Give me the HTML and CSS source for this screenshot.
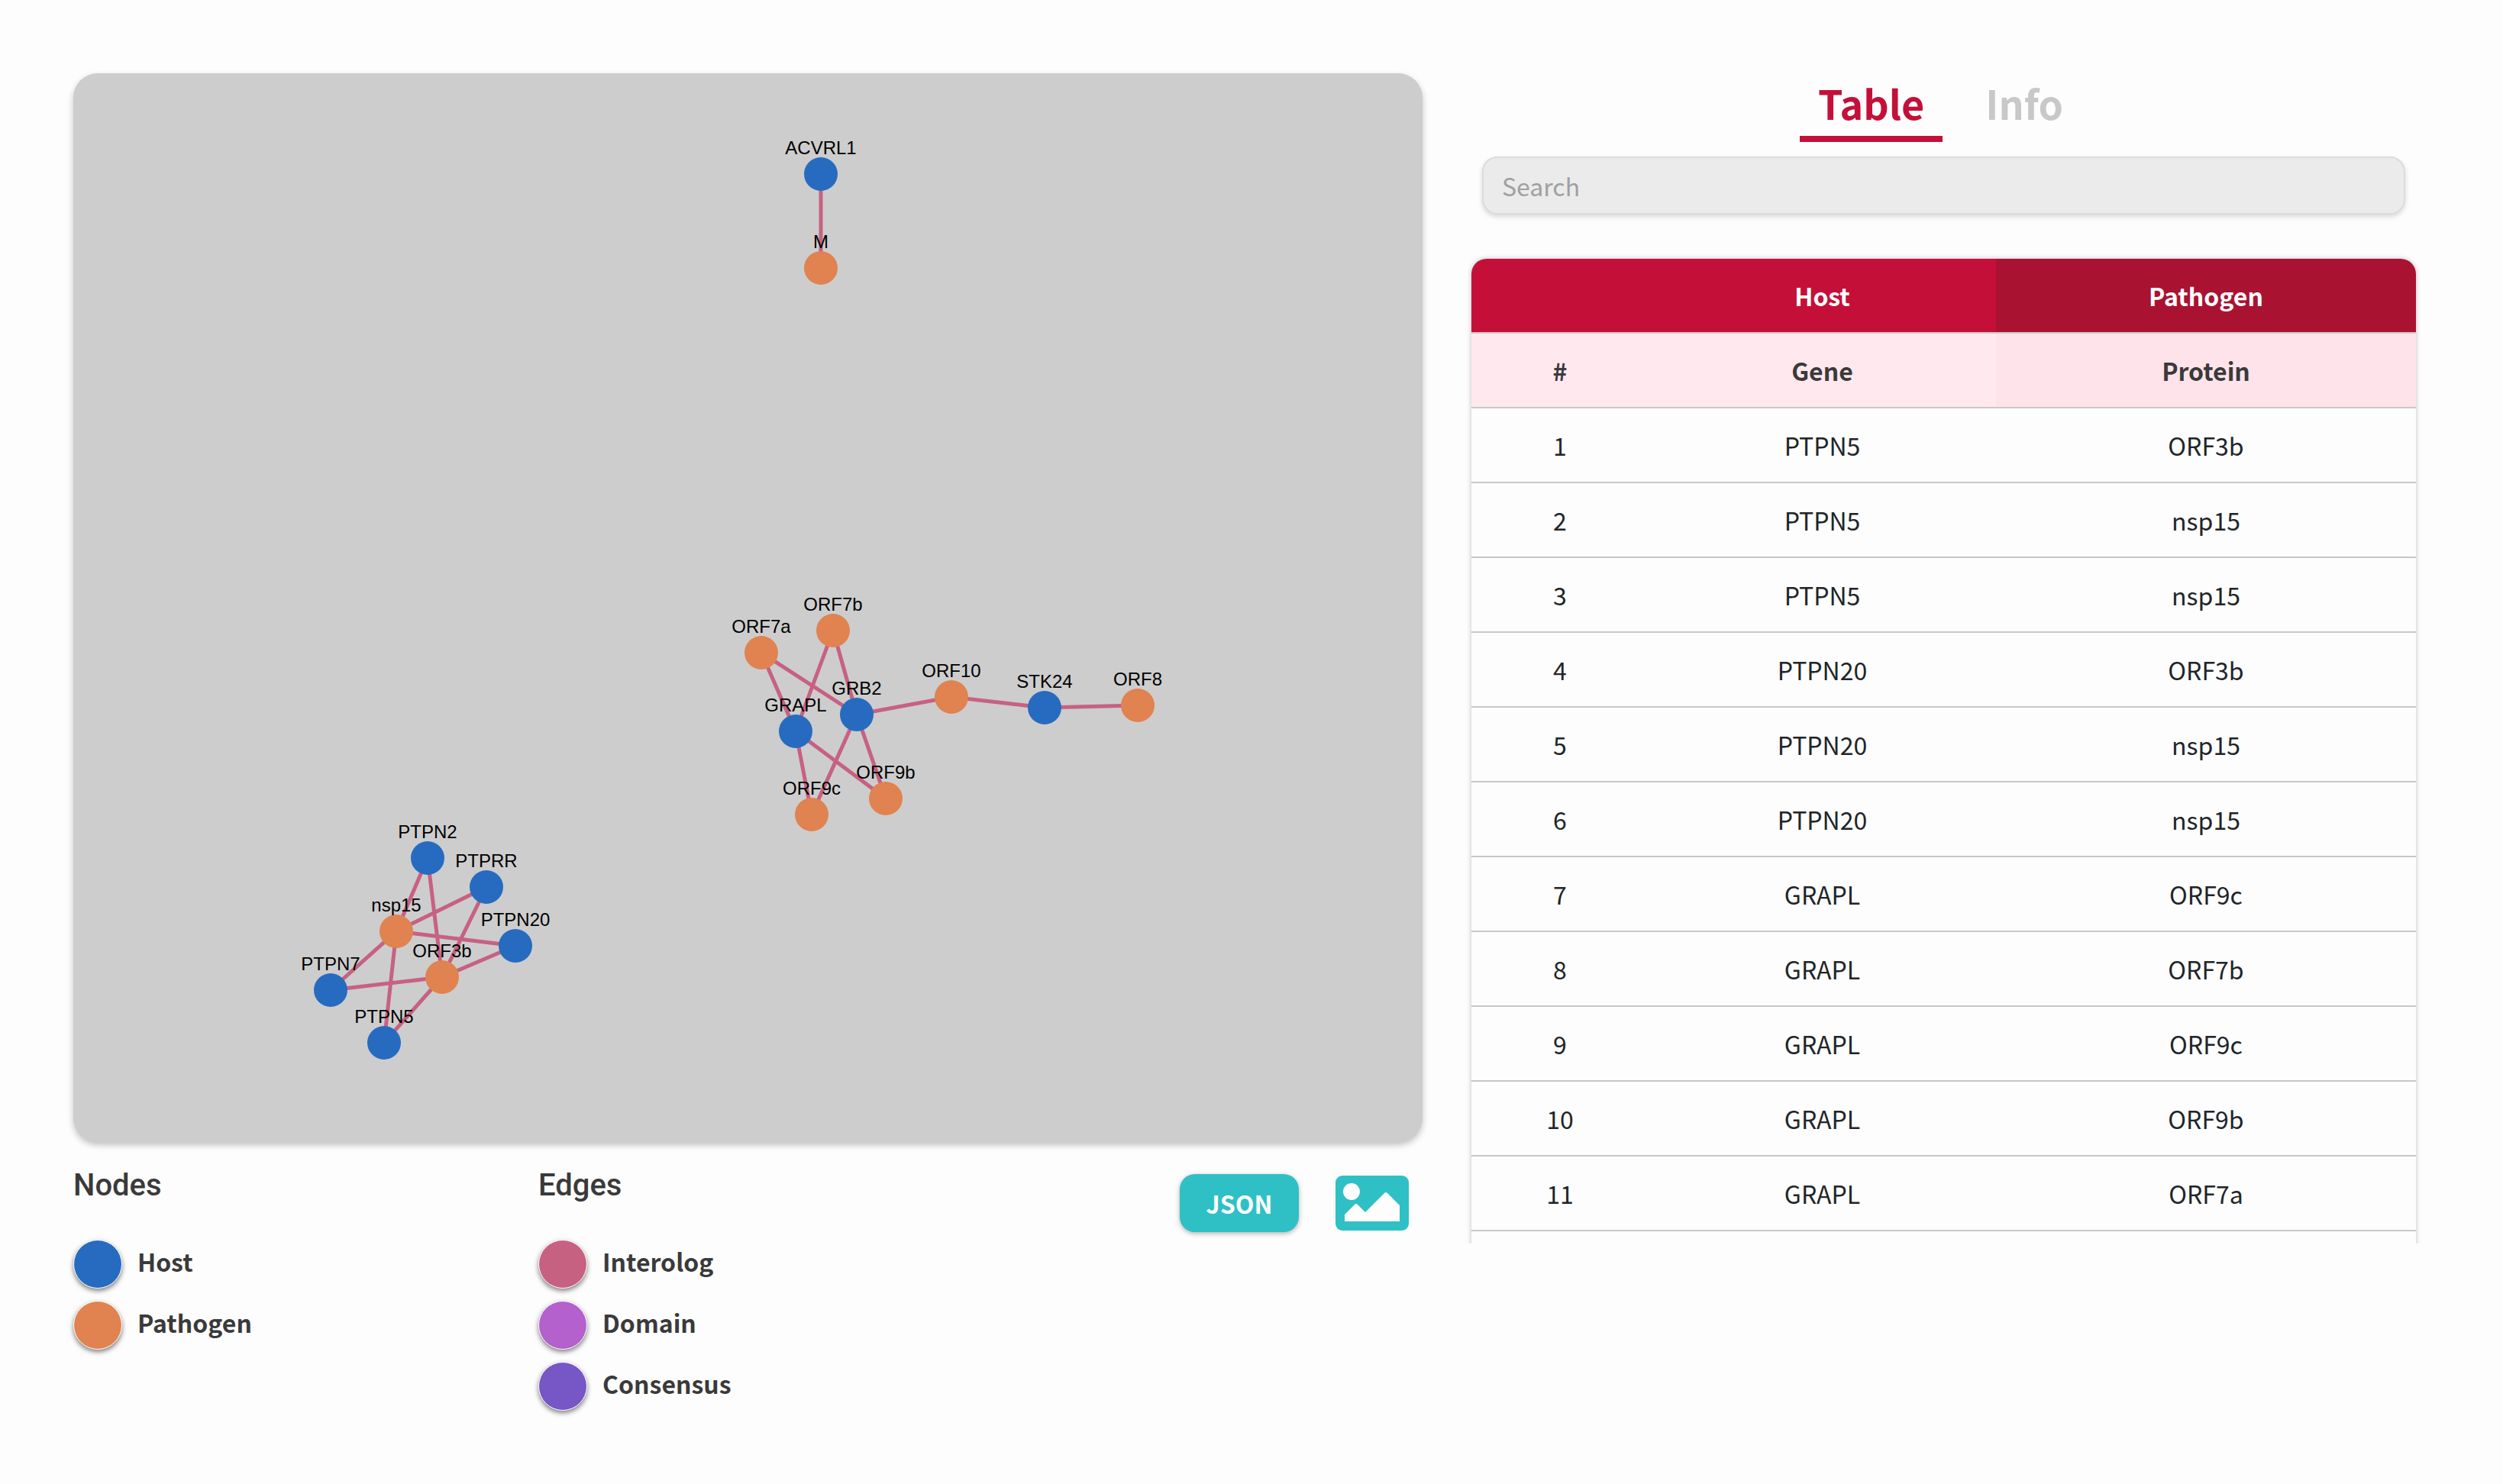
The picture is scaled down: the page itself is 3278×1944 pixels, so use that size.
FILE: index.html
```html
<!DOCTYPE html>
<html lang="en">
<head>
<meta charset="utf-8">
<meta name="viewport" content="width=device-width, initial-scale=1">
<title>Interaction network</title>
<link rel="stylesheet" href="styles.css">
</head>
<body>
<main class="page">
  <section class="network">
    <svg class="graph" viewBox="0 0 1767 1400" role="img" aria-label="Host and pathogen interaction network">
      <g transform="translate(-96 -96)">
        <g class="edges">
          <path d="M1075 228V351"/>
          <path d="M997 855L1122 936M997 855L1042 958M1091 826L1122 936M1091 826L1042 958M1063 1067L1122 936M1063 1067L1042 958M1160 1046L1122 936M1160 1046L1042 958M1122 936L1246 913L1368 927L1490 924"/>
          <path d="M560 1124L519 1220M560 1124L579 1280M637 1162L519 1220M637 1162L579 1280M675 1239L519 1220M675 1239L579 1280M433 1297L519 1220M433 1297L579 1280M503 1366L519 1220M503 1366L579 1280"/>
        </g>
        <g class="node-host">
          <circle cx="1075" cy="228" r="22"/><circle cx="1122" cy="936" r="22"/><circle cx="1042" cy="958" r="22"/><circle cx="1368" cy="927" r="22"/>
          <circle cx="560" cy="1124" r="22"/><circle cx="637" cy="1162" r="22"/><circle cx="675" cy="1239" r="22"/><circle cx="433" cy="1297" r="22"/><circle cx="503" cy="1366" r="22"/>
        </g>
        <g class="node-pathogen">
          <circle cx="1075" cy="351" r="22"/><circle cx="997" cy="855" r="22"/><circle cx="1091" cy="826" r="22"/><circle cx="1246" cy="913" r="22"/><circle cx="1490" cy="924" r="22"/>
          <circle cx="1063" cy="1067" r="22"/><circle cx="1160" cy="1046" r="22"/><circle cx="519" cy="1220" r="22"/><circle cx="579" cy="1280" r="22"/>
        </g>
        <g class="node-labels">
          <text x="1075" y="202">ACVRL1</text><text x="1075" y="325">M</text>
          <text x="997" y="829">ORF7a</text><text x="1091" y="800">ORF7b</text><text x="1122" y="910">GRB2</text><text x="1042" y="932">GRAPL</text>
          <text x="1246" y="887">ORF10</text><text x="1368" y="901">STK24</text><text x="1490" y="898">ORF8</text><text x="1063" y="1041">ORF9c</text><text x="1160" y="1020">ORF9b</text>
          <text x="560" y="1098">PTPN2</text><text x="637" y="1136">PTPRR</text><text x="519" y="1194">nsp15</text><text x="675" y="1213">PTPN20</text><text x="579" y="1254">ORF3b</text><text x="433" y="1271">PTPN7</text><text x="503" y="1340">PTPN5</text>
        </g>
      </g>
    </svg>
    <div class="below">
      <section class="legend">
        <h2>Nodes</h2>
        <ul>
          <li><span class="dot host"></span>Host</li>
          <li><span class="dot pathogen"></span>Pathogen</li>
        </ul>
      </section>
      <section class="legend">
        <h2>Edges</h2>
        <ul>
          <li><span class="dot interolog"></span>Interolog</li>
          <li><span class="dot domain"></span>Domain</li>
          <li><span class="dot consensus"></span>Consensus</li>
        </ul>
      </section>
      <div class="actions">
        <button class="json" type="button">JSON</button>
        <button class="image" type="button" aria-label="Save as image">
          <svg viewBox="0 0 96 72" width="96" height="72" aria-hidden="true">
            <rect width="96" height="72" rx="9" fill="#2fc0c6"/>
            <circle cx="21" cy="21" r="11" fill="#fdfdfd"/>
            <path d="M12 51L25 38Q27 36 29 38L39 48L64 23Q66 21 68 23L84 39V60H12Z" fill="#fdfdfd"/>
          </svg>
        </button>
      </div>
    </div>
  </section>
  <section class="data">
    <nav class="tabs">
      <button class="tab active" type="button">Table</button>
      <button class="tab" type="button">Info</button>
    </nav>
    <input class="search" type="search" placeholder="Search" aria-label="Search">
    <div class="table-wrap">
      <table>
        <colgroup><col class="c-num"><col class="c-host"><col class="c-path"></colgroup>
        <thead>
          <tr class="groups"><th></th><th>Host</th><th>Pathogen</th></tr>
          <tr class="fields"><th>#</th><th>Gene</th><th>Protein</th></tr>
        </thead>
        <tbody>
          <tr><td>1</td><td>PTPN5</td><td>ORF3b</td></tr>
          <tr><td>2</td><td>PTPN5</td><td>nsp15</td></tr>
          <tr><td>3</td><td>PTPN5</td><td>nsp15</td></tr>
          <tr><td>4</td><td>PTPN20</td><td>ORF3b</td></tr>
          <tr><td>5</td><td>PTPN20</td><td>nsp15</td></tr>
          <tr><td>6</td><td>PTPN20</td><td>nsp15</td></tr>
          <tr><td>7</td><td>GRAPL</td><td>ORF9c</td></tr>
          <tr><td>8</td><td>GRAPL</td><td>ORF7b</td></tr>
          <tr><td>9</td><td>GRAPL</td><td>ORF9c</td></tr>
          <tr><td>10</td><td>GRAPL</td><td>ORF9b</td></tr>
          <tr><td>11</td><td>GRAPL</td><td>ORF7a</td></tr>
          <tr><td></td><td></td><td></td></tr>
        </tbody>
      </table>
    </div>
  </section>
</main>
</body>
</html>
```
FILE: styles.css
```css
* { box-sizing: border-box; }
body {
  margin: 0;
  background: #fdfdfd;
  color: #3a3a3a;
  font: 32px/48px "Noto Sans CJK JP", "Noto Sans", sans-serif;
}
button, input { font: inherit; }
button { border: 0; padding: 0; background: none; cursor: pointer; }

.page {
  display: grid;
  grid-template-columns: 1767fr 1237fr;
  gap: 64px;
  align-items: start;
  padding: 96px 114px 80px 96px;
}

.graph {
  display: block;
  width: 100%;
  background: #cdcdcd;
  border-radius: 32px;
  box-shadow: 0 4px 8px rgba(0, 0, 0, 0.24);
}
.edges { fill: none; stroke: #c76182; stroke-width: 5; }
.node-host { fill: #276bc0; }
.node-pathogen { fill: #e08350; }
.node-labels { font: 24px "Liberation Sans", sans-serif; fill: #000; text-anchor: middle; }

.below {
  display: grid;
  grid-template-columns: 609px 1fr auto;
  padding-top: 33px;
}
.legend h2 { margin: 0 0 47px; font: 500 40px/48px Roboto, sans-serif; }
.legend ul { margin: 0; padding: 0; list-style: none; display: grid; gap: 16px; }
.legend li { display: flex; gap: 20px; height: 64px; font-weight: 700; line-height: 56px; }
.dot {
  width: 64px;
  height: 64px;
  border: 1px solid #fff;
  border-radius: 50%;
  box-shadow: 0 3px 6px rgba(0, 0, 0, 0.5);
}
.host { background: #276bc0; }
.pathogen { background: #e08350; }
.interolog { background: #c76182; }
.domain { background: #b460cd; }
.consensus { background: #7756c5; }

.actions { display: flex; align-items: flex-start; gap: 48px; padding: 9px 18px 0 0; }
.json {
  width: 156px;
  height: 76px;
  border-radius: 20px;
  background: #2fc0c6;
  color: #fff;
  font-weight: 700;
  box-shadow: 0 2px 6px rgba(0, 0, 0, 0.3);
}
.image { padding-top: 2px; }
.image svg { display: block; }

.tabs { display: flex; justify-content: center; gap: 32px; padding-right: 8px; }
.tab {
  height: 90px;
  padding: 0 24px 4px;
  border-bottom: 8px solid transparent;
  font-size: 52px;
  font-weight: 700;
  line-height: 78px;
  color: #c8c8c8;
}
.tab.active { color: #c41039; border-color: #c41039; }
.search {
  display: block;
  width: calc(100% - 28px);
  height: 76px;
  margin: 19px 14px 58px;
  padding: 0 24px;
  border: 2px solid #dcdcdc;
  border-radius: 20px;
  background: #ebebeb;
  box-shadow: 0 3px 6px rgba(0, 0, 0, 0.15);
}
.search::placeholder { color: #a0a0a0; opacity: 1; }

.table-wrap { max-height: 1298px; margin: -8px; padding: 8px 8px 0; overflow: hidden; }
table {
  width: 100%;
  table-layout: fixed;
  border-collapse: separate;
  border-spacing: 0;
  border-radius: 20px;
  box-shadow: 0 0 6px rgba(0, 0, 0, 0.25);
  text-align: center;
  color: #212529;
}
.c-num { width: 232px; }
.c-host { width: 455px; }
th, td { height: 98px; padding: 0; border-bottom: 2px solid #c8c8c8; background: #fdfdfd; font-weight: 400; }
th { font-weight: 700; }
.groups th { background: #c41039; color: #fff; }
.groups th:first-child { border-top-left-radius: 20px; }
.groups th:last-child { background: #aa1232; border-top-right-radius: 20px; }
.fields th { background: #ffe8ee; color: #3a3a3a; }
.fields th:last-child { background: #ffe3ea; }
```
